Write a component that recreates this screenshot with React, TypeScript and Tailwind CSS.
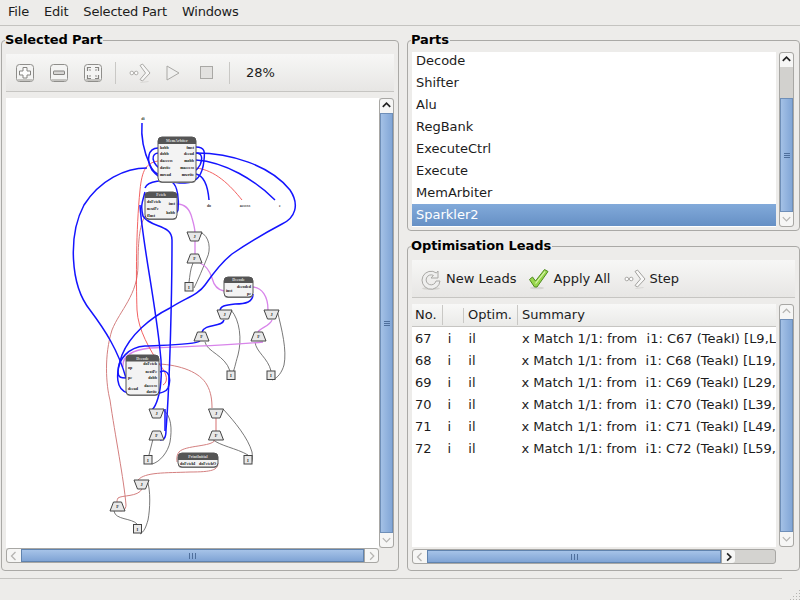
import type { ReactNode } from "react";

const parts = ["Decode", "Shifter", "Alu", "RegBank", "ExecuteCtrl", "Execute", "MemArbiter", "Sparkler2"];

const leads = [
  ["67", "C67 (TeakI) [L9,L"],
  ["68", "C68 (TeakI) [L19,"],
  ["69", "C69 (TeakI) [L29,"],
  ["70", "C70 (TeakI) [L39,"],
  ["71", "C71 (TeakI) [L49,"],
  ["72", "C72 (TeakI) [L59,"],
];

function Chevron({ dir, dark }: { dir: "up" | "down" | "left" | "right"; dark?: boolean }) {
  const d = {
    up: "M3 8l4-4 4 4",
    down: "M3 5l4 4 4-4",
    left: "M8.5 3l-4 4 4 4",
    right: "M5.5 3l4 4-4 4",
  }[dir];
  return (
    <svg width="14" height="14" viewBox="0 0 14 14">
      <path d={d} fill="none" stroke={dark ? "#222" : "#b5b4b1"} strokeWidth={dark ? 1.8 : 1.3} />
    </svg>
  );
}

function VScroll({ track = 0, thumb, upDark, active = true }: { track?: number; thumb: number; upDark?: boolean; active?: boolean }) {
  return (
    <div className="flex w-[15px] flex-col rounded-[3px] border border-[#a8a7a4] bg-[#d4d3d0]">
      <div className="flex h-[14px] items-center justify-center rounded-t-[3px] bg-[#f6f6f5]">
        <Chevron dir="up" dark={upDark} />
      </div>
      {track > 0 && <div className="bg-[#d2d1ce]" style={{ height: track }} />}
      <div
        className="flex flex-1 items-center justify-center border-x border-y border-[#6f8fb8] bg-gradient-to-r from-[#a4c1e6] to-[#82a6d6]"
        style={{ height: thumb }}
      >
        {active && (
          <div className="flex flex-col gap-[1px]">
            <div className="h-px w-[6px] bg-[#4f6f9c]" />
            <div className="h-px w-[6px] bg-[#4f6f9c]" />
            <div className="h-px w-[6px] bg-[#4f6f9c]" />
          </div>
        )}
      </div>
      <div className="flex h-[14px] items-center justify-center rounded-b-[3px] bg-[#f6f6f5]">
        <Chevron dir="down" />
      </div>
    </div>
  );
}

function HScroll({ children, rightDark }: { children: ReactNode; rightDark?: boolean }) {
  return (
    <div className="flex h-[15px] rounded-[3px] border border-[#a8a7a4] bg-[#d4d3d0]">
      <div className="flex w-[14px] items-center justify-center rounded-l-[3px] bg-[#f6f6f5]">
        <Chevron dir="left" />
      </div>
      {children}
      <div className="flex w-[14px] items-center justify-center rounded-r-[3px] border-l border-[#a8a7a4] bg-[#f6f6f5]">
        <Chevron dir="right" dark={rightDark} />
      </div>
    </div>
  );
}

function HThumb({ className }: { className: string }) {
  return (
    <div className={`flex items-center justify-center gap-[2px] border border-[#6083ae] bg-gradient-to-b from-[#a6c3e8] to-[#80a4d5] ${className}`}>
      <div className="h-[6px] w-px bg-[#4f6f9c]" />
      <div className="h-[6px] w-px bg-[#4f6f9c]" />
      <div className="h-[6px] w-px bg-[#4f6f9c]" />
    </div>
  );
}

function GroupBox({ title, className, children }: { title: string; className: string; children: ReactNode }) {
  return (
    <div className={`relative rounded-[4px] border border-[#aaa9a6] ${className}`}>
      <span className="absolute -top-[9px] left-[3px] bg-[#edecea] pr-px text-[13px] leading-[16px] font-bold tracking-[-0.1px] text-black">{title}</span>
      {children}
    </div>
  );
}

function ZoomIcon({ kind }: { kind: "plus" | "minus" | "fit" }) {
  return (
    <svg width="18" height="18" viewBox="0 0 18 18">
      <rect x="0.5" y="0.5" width="17" height="17" rx="3" fill="#f4f4f3" stroke="#8f8e8b" />
      <rect x="1.5" y="15" width="15" height="2" rx="0.7" fill="#c4c3c0" />
      {kind === "plus" && <path d="M7 3.5h4v3.5h3.5v4H11v3H7v-3H3.5V7H7z" fill="#fdfdfd" stroke="#858481" />}
      {kind === "minus" && <rect x="3.5" y="7" width="11" height="3.5" rx="0.5" fill="#d6d5d3" stroke="#858481" />}
      {kind === "fit" && (
        <path
          d="M3.5 7V3.5H7M11 3.5h3.5V7M3.5 11v3.5H7M14.5 11v3.5H11M6.5 6.5l-1-1M11.5 6.5l1-1M6.5 11.5l-1 1M11.5 11.5l1 1"
          fill="none"
          stroke="#858481"
          strokeWidth="1.2"
        />
      )}
    </svg>
  );
}

function StepIcon({ size = 22 }: { size?: number }) {
  return (
    <svg width={size} height={size} viewBox="0 0 22 22">
      <circle cx="2.8" cy="11" r="1.8" fill="#fff" stroke="#aaa9a6" />
      <circle cx="7.2" cy="11" r="1.8" fill="#fff" stroke="#aaa9a6" />
      <path d="M11 3.5l2.5-1.5 7.5 9-7.5 8-2.5-1.5 5.5-6.5z" fill="#f8f8f7" stroke="#a3a29f" strokeLinejoin="round" />
      <path d="M11.5 20.5l8-1" stroke="#d8d7d4" />
    </svg>
  );
}

function NewLeadsIcon() {
  return (
    <svg width="22" height="24" viewBox="0 0 22 24">
      <ellipse cx="11" cy="21.5" rx="9" ry="1.5" fill="#d5d4d1" />
      <path
        d="M18 4v7h-7l2.4-2.6A5 5 0 1 0 16 14h4a9 9 0 1 1-3.6-8z"
        fill="#efefee"
        stroke="#a9a8a5"
        strokeLinejoin="round"
      />
    </svg>
  );
}

function CheckIcon() {
  return (
    <svg width="22" height="22" viewBox="0 0 22 22">
      <ellipse cx="9" cy="20" rx="7" ry="1.3" fill="#d5d4d1" />
      <path
        d="M1.5 11.5l3-2.5 3 4L16.5 1.5l3.5 2-11 15.5H6.5z"
        fill="#98d64c"
        stroke="#4f8a1f"
        strokeLinejoin="round"
      />
      <path d="M7.5 15.5L17 3.5" stroke="#dcf5b4" strokeWidth="1.2" />
    </svg>
  );
}

function Trap({ x, y, w = 15, h = 9, label }: { x: number; y: number; w?: number; h?: number; label: "J" | "F" }) {
  const pts =
    label === "J"
      ? `${x},${y} ${x + w},${y} ${x + w - 3.5},${y + h} ${x + 3.5},${y + h}`
      : `${x + 3.5},${y} ${x + w - 3.5},${y} ${x + w},${y + h} ${x},${y + h}`;
  return (
    <g>
      <polygon points={pts} fill="#e8e8e8" stroke="#444" strokeWidth="1" />
      <text x={x + w / 2} y={y + h / 2 + 1.5} textAnchor="middle" fontSize="4.5" fontWeight="700" fill="#333" fontFamily="Liberation Serif, serif">
        {label}
      </text>
    </g>
  );
}

function IBox({ x, y }: { x: number; y: number }) {
  return (
    <g>
      <rect x={x} y={y} width="8" height="8.5" fill="#e8e8e8" stroke="#444" strokeWidth="1" />
      <text x={x + 4} y={y + 6} textAnchor="middle" fontSize="4.5" fontWeight="700" fill="#333" fontFamily="Liberation Serif, serif">
        I
      </text>
    </g>
  );
}

function PartBox({
  x, y, w, h, head = 7, name, left, right,
}: {
  x: number; y: number; w: number; h: number; head?: number; name: string;
  left: [string, number][]; right: [string, number][];
}) {
  return (
    <g fontFamily="Liberation Serif, serif" fontSize="4" fontWeight="700">
      <rect x={x} y={y + 1} width={w} height={h} rx="4" fill="#888" />
      <rect x={x} y={y} width={w} height={h} rx="4" fill="#f3f3f3" stroke="#555" strokeWidth="1" />
      <path d={`M${x} ${y + head}v-${head - 4}a4 4 0 0 1 4-4h${w - 8}a4 4 0 0 1 4 4v${head - 4}z`} fill="#555" />
      <text x={x + w / 2} y={y + head - 1.8} textAnchor="middle" fill="#ddd">{name}</text>
      {left.map(([t, py]) => (
        <text key={t} x={x + 2} y={py + 1.3} fill="#111">{t}</text>
      ))}
      {right.map(([t, py]) => (
        <text key={t} x={x + w - 2} y={py + 1.3} textAnchor="end" fill="#111">{t}</text>
      ))}
    </g>
  );
}

const blueWires = [
  "M142 123C141 135 143 150 150 165C153 172 157 174 160 175",
  "M147 168C125 168 100 180 84 205C68 235 70 285 90 310C105 330 118 350 126 378",
  "M196 153C230 153 270 165 290 190C300 205 295 218 282 224C265 233 245 245 232 254C222 262 212 275 205 285C198 295 185 298 170 308C150 318 130 335 122 355C115 375 116 390 128 393C145 396 165 395 168 388C172 378 168 368 160 372",
  "M196 160C225 162 255 180 275 200",
  "M196 147C205 147 205 152 204 160C203 172 198 183 185 183C170 183 160 180 152 170C146 160 148 148 158 148",
  "M196 153C202 153 203 158 200 165C195 175 180 178 165 172C150 164 150 152 160 153",
  "M196 174C205 176 208 188 209 200",
  "M145 188C148 180 165 180 172 182C178 186 179 200 178 210C177 213 176 214 172 214",
  "M145 192C143 200 140 205 143 216C150 228 172 224 172 240C172 290 170 380 166 430C166 438 164 440 160 440",
  "M140 205C142 240 155 300 160 350C162 365 162 385 158 398C156 405 154 408 152 410",
  "M253 294C253 302 246 304 235 304C225 305 220 306 220 311",
  "M224 320C222 328 205 323 202 332",
  "M200 341C195 345 165 345 145 346C128 347 118 360 118 372C118 378 122 378 126 378",
];

const pinkWires = [
  "M177 204C185 204 190 210 192 218C194 225 195 230 195 233",
  "M195 241V254",
  "M200 263C207 266 210 272 212 278C214 286 218 290 224 291",
  "M253 287C262 288 268 296 268 310",
  "M272 320C270 326 260 328 258 332",
  "M263 342C230 345 180 347 150 348C132 350 122 356 123 367",
];

const redWires = [
  "M158 161C146 163 142 170 140 190C136 230 136 280 137 310C138 330 150 350 160 365C168 375 168 382 163 385",
  "M196 168C215 170 230 185 242 200",
];

const salmonWires = [
  "M146 215C140 222 138 240 138 265C138 295 120 310 112 330C104 355 106 385 110 400C115 435 124 480 126 505C126 510 122 512 118 510",
  "M159 364C180 365 200 372 207 385C211 392 212 400 212 408",
  "M215 440C212 447 185 445 179 452C176 456 177 460 177 462",
  "M218 463C218 470 212 472 190 472C165 473 145 472 138 480",
  "M142 489C138 497 122 495 118 498C117 500 117 501 117 502",
];

const greyWires = [
  "M200 232C210 236 211 250 207 258C203 268 198 280 194 288",
  "M193 263C190 270 190 276 189 282",
  "M231 310C240 320 242 340 238 355C235 365 235 368 231 378",
  "M205 342C207 352 225 355 230 371",
  "M277 310C282 330 287 350 284 365C282 372 278 378 272 380",
  "M255 342C256 352 268 358 271 371",
  "M162 409C172 415 172 430 170 442C168 452 160 462 152 464",
  "M153 439L149 455",
  "M223 409C235 422 248 438 252 452C253 460 252 463 250 464",
  "M212 439C220 446 236 448 248 455",
  "M147 480C151 490 150 510 148 520C146 527 144 532 140 534",
  "M114 511C115 520 132 518 137 524",
];

function Diagram() {
  return (
    <svg className="block" width="373" height="450" viewBox="6 98 373 450">
      <text x="143" y="120" textAnchor="middle" fontSize="4" fontWeight="700" fill="#333" fontFamily="Liberation Serif, serif">di</text>
      {greyWires.map((d) => (
        <path key={d} d={d} fill="none" stroke="#555" strokeWidth="0.8" />
      ))}
      {salmonWires.map((d) => (
        <path key={d} d={d} fill="none" stroke="#d47f7f" strokeWidth="1" />
      ))}
      <path d="M216 418V431" stroke="#e8b0b0" strokeWidth="1.8" />
      {pinkWires.map((d) => (
        <path key={d} d={d} fill="none" stroke="#d884ea" strokeWidth="1.3" />
      ))}
      {redWires.map((d) => (
        <path key={d} d={d} fill="none" stroke="#f05050" strokeWidth="0.9" />
      ))}
      {blueWires.map((d) => (
        <path key={d} d={d} fill="none" stroke="#1414ff" strokeWidth="1.5" />
      ))}
      <path d="M165 431V409" stroke="#1414ff" strokeWidth="1.5" />

      <PartBox x={158} y={137} w={38} h={45} name="MemArbiter"
        left={[["hobb", 147.5], ["dobb", 153.5], ["daccess", 160.7], ["davite", 167.7], ["mread", 174.5]]}
        right={[["fmst", 147.5], ["decad", 153.5], ["mobb", 160.7], ["maccess", 167.7], ["mwrite", 174.5]]} />
      <PartBox x={145} y={192} w={32} h={27} head={6} name="Fetch"
        left={[["doFetch", 202], ["nextPc", 209], ["fInst", 215.5]]}
        right={[["inst", 204], ["hobb", 213]]} />
      <PartBox x={224} y={277} w={29} h={20} head={6} name="Decode"
        left={[["inst", 291]]}
        right={[["decoded", 286.5], ["pc", 294]]} />
      <PartBox x={126} y={355} w={33} h={40} head={6.5} name="Decode"
        left={[["op", 368], ["pc", 378], ["decad", 389]]}
        right={[["doFetch", 364], ["nextPc", 371.5], ["dobb", 378], ["daccess", 385.5], ["davite", 392]]} />
      <PartBox x={178} y={453} w={40} h={14} head={7} name="PrintInitial"
        left={[["doFetchI", 463.5]]}
        right={[["doFetchO", 463.5]]} />

      <g fontSize="4" fontWeight="700" fill="#333" fontFamily="Liberation Serif, serif" textAnchor="middle">
        <text x="209" y="207">do</text>
        <text x="245" y="207">access</text>
        <text x="280" y="207">e</text>
      </g>

      <Trap x={187} y={232} label="J" />
      <Trap x={187} y={254} label="F" />
      <IBox x={185} y={282.5} />
      <Trap x={217} y={310} label="J" />
      <Trap x={264} y={310} label="J" />
      <Trap x={194} y={332} label="F" />
      <Trap x={251} y={332} label="F" />
      <IBox x={227} y={371} />
      <IBox x={267} y={371} />
      <Trap x={149} y={409} label="J" />
      <Trap x={208.5} y={409} label="J" />
      <Trap x={149} y={431} label="F" />
      <Trap x={208.5} y={431} label="F" />
      <IBox x={144} y={455.5} />
      <IBox x={244} y={455.5} />
      <Trap x={134} y={480} label="J" />
      <Trap x={110} y={502} label="F" />
      <IBox x={133.5} y={524.5} />
    </svg>
  );
}

function Separator() {
  return <div className="h-[22px] w-px bg-[#c9c8c5]" />;
}

export default function App() {
  return (
    <div className="flex h-[600px] w-[800px] flex-col overflow-hidden bg-[#edecea] font-['DejaVu_Sans',sans-serif] text-[13px] text-[#1c1c1c]">
      <div className="flex h-[26px] items-center border-b border-[#c4c3c0] pb-[1px] pl-[0.5px] tracking-[-0.2px]">
        {["File", "Edit", "Selected Part", "Windows"].map((m) => (
          <span key={m} className="px-[7.5px]">{m}</span>
        ))}
      </div>

      <div className="flex h-[552px] pt-[14px] pl-px">
        <GroupBox title="Selected Part" className="h-[531px] w-[398px] pt-[13px] pl-[4px]">
          <div className="flex h-[38px] w-[388px] items-center border-b border-[#c6c5c2] bg-gradient-to-b from-[#f7f7f6] to-[#e7e6e4] pl-[10px]">
            <ZoomIcon kind="plus" />
            <div className="w-4" />
            <ZoomIcon kind="minus" />
            <div className="w-4" />
            <ZoomIcon kind="fit" />
            <div className="w-[13px]" />
            <Separator />
            <div className="ml-[13px] opacity-90"><StepIcon /></div>
            <svg className="ml-[14px]" width="16" height="18" viewBox="0 0 16 18">
              <path d="M2 2l12 7-12 7z" fill="#f0f0ef" stroke="#a9a8a5" />
            </svg>
            <svg className="ml-[19px]" width="14" height="14" viewBox="0 0 14 14">
              <rect x="0.5" y="0.5" width="12" height="12" fill="#e2e1df" stroke="#a9a8a5" />
            </svg>
            <div className="w-[15px]" />
            <Separator />
            <span className="ml-[16px]">28%</span>
          </div>
          <div className="mt-[6px] flex h-[450px] w-[388px]">
            <div className="h-[450px] w-[373px] bg-white"><Diagram /></div>
            <VScroll thumb={420} upDark />
          </div>
          <div className="w-[373px]">
            <HScroll>
              <HThumb className="flex-1" />
            </HScroll>
          </div>
        </GroupBox>

        <div className="relative w-[8px]">
          <div className="absolute top-[240px] left-[1px] h-[46px] w-[5px] bg-[radial-gradient(#b5b4b1_35%,transparent_40%)] bg-[length:2px_2px]" />
        </div>

        <div className="flex w-[393px] flex-col">
          <GroupBox title="Parts" className="h-[191px] pt-[11px] pl-[4px]">
            <div className="flex h-[175px]">
              <div className="h-[175px] w-[364px] overflow-hidden bg-white">
                <div className="-mt-[2px]">
                  {parts.map((p) => (
                    <div
                      key={p}
                      className={
                        p === "Sparkler2"
                          ? "flex h-[22px] items-center bg-gradient-to-b from-[#82aada] to-[#6690c5] pl-[4px] text-white"
                          : "flex h-[22px] items-center pl-[4px]"
                      }
                    >
                      {p}
                    </div>
                  ))}
                </div>
              </div>
              <div className="ml-[3px] flex">
                <VScroll track={31} thumb={113} upDark />
              </div>
            </div>
          </GroupBox>

          <div className="relative h-[15px]">
            <div className="absolute top-[2px] left-[173px] h-[5px] w-[46px] bg-[radial-gradient(#b5b4b1_35%,transparent_40%)] bg-[length:2px_2px]" />
          </div>

          <GroupBox title="Optimisation Leads" className="h-[325px] pt-[13px] pl-[4px]">
            <div className="flex h-[38px] w-[383px] items-center gap-[3px] border-b border-[#c6c5c2] bg-gradient-to-b from-[#f7f7f6] to-[#e7e6e4] pl-[8px]">
              <NewLeadsIcon />
              <span className="ml-px">New Leads</span>
              <div className="ml-[8px]"><CheckIcon /></div>
              <span className="ml-px">Apply All</span>
              <div className="ml-[11px]"><StepIcon /></div>
              <span>Step</span>
            </div>
            <div className="mt-[6px] flex h-[243px]">
              <div className="h-[243px] w-[364px] overflow-hidden bg-white">
                <div className="flex h-[23px] items-center border-b border-[#c6c5c2] bg-gradient-to-b from-[#f8f8f7] to-[#eaeae8]">
                  <div className="w-[31px] border-r border-[#c9c8c5] pl-[3px]">No.</div>
                  <div className="h-[15px] w-[21px] border-r border-[#c9c8c5]" />
                  <div className="w-[54px] border-r border-[#c9c8c5] pl-[4px]">Optim.</div>
                  <div className="pl-[4px]">Summary</div>
                </div>
                {leads.map(([n, s], i) => (
                  <div key={n} className={`flex h-[22px] items-center whitespace-nowrap ${i === 0 ? "mt-px" : ""}`}>
                    <div className="w-[31px] pl-[3px]">{n}</div>
                    <div className="w-[21px] pl-[5px]">i</div>
                    <div className="w-[54px] pl-[5px]">il</div>
                    <div className="w-[131px] pl-[5px]">x Match 1/1: from</div>
                    <div>i1: {s}</div>
                  </div>
                ))}
              </div>
              <div className="ml-[3px] flex">
                <VScroll thumb={213} active={false} />
              </div>
            </div>
            <div className="mt-[2px] w-[364px]">
              <HScroll rightDark>
                <HThumb className="w-[294px]" />
              </HScroll>
            </div>
          </GroupBox>
        </div>
      </div>

      <div className="relative flex-1">
        <div className="h-px w-[782px] bg-[#c4c3c0]" />
        <div className="absolute right-0 bottom-0 h-[11px] w-[11px] bg-[radial-gradient(#b5b4b1_35%,transparent_40%)] bg-[length:3px_3px] [clip-path:polygon(100%_0,100%_100%,0_100%)]" />
      </div>
    </div>
  );
}
